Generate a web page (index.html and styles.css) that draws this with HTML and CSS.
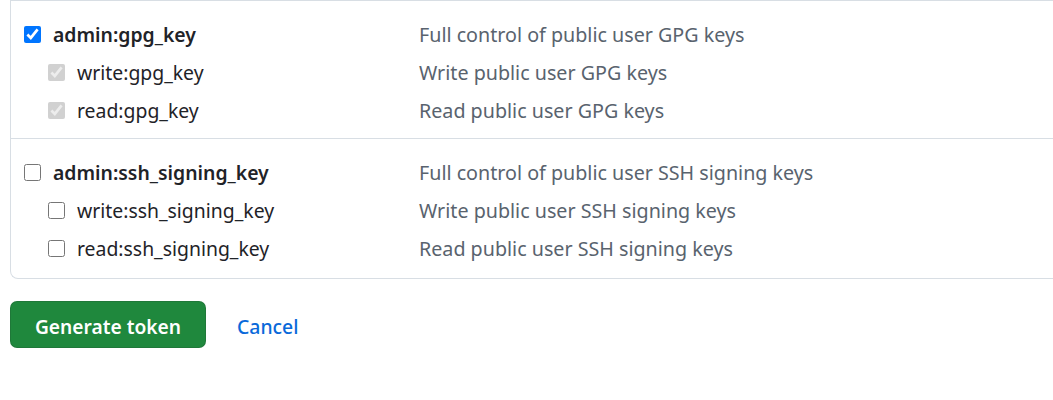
FILE: index.html
```html
<!DOCTYPE html>
<html lang="en">
<head>
<meta charset="utf-8">
<link rel="stylesheet" href="styles.css">
</head>
<body>
<div class="page">
  <div class="scopes">
    <div class="group first">
      <div class="row">
        <label class="scope main"><input type="checkbox" checked><span>admin:gpg_key</span></label>
        <span class="desc">Full control of public user GPG keys</span>
      </div>
      <div class="row">
        <label class="scope sub"><input type="checkbox" checked disabled><span>write:gpg_key</span></label>
        <span class="desc">Write public user GPG keys</span>
      </div>
      <div class="row">
        <label class="scope sub"><input type="checkbox" checked disabled><span>read:gpg_key</span></label>
        <span class="desc">Read public user GPG keys</span>
      </div>
    </div>
    <div class="group">
      <div class="row">
        <label class="scope main"><input type="checkbox"><span>admin:ssh_signing_key</span></label>
        <span class="desc">Full control of public user SSH signing keys</span>
      </div>
      <div class="row">
        <label class="scope sub"><input type="checkbox"><span>write:ssh_signing_key</span></label>
        <span class="desc">Write public user SSH signing keys</span>
      </div>
      <div class="row">
        <label class="scope sub"><input type="checkbox"><span>read:ssh_signing_key</span></label>
        <span class="desc">Read public user SSH signing keys</span>
      </div>
    </div>
  </div>
  <div class="actions">
    <button class="btn-primary" type="button">Generate token</button>
    <a class="cancel" href="#">Cancel</a>
  </div>
</div>
</body>
</html>
```

FILE: styles.css
```css
html, body {
  margin: 0;
  padding: 0;
  background: #ffffff;
}
body {
  font-family: "Noto Sans", "Open Sans", sans-serif;
  font-size: 19.4px;
  color: #1f2328;
}
.page {
  padding-left: 10px;
}
.scopes {
  border: 1px solid #d8dee4;
  border-top: 0;
  border-right: 0;
  border-radius: 0 0 0 8px;
}
.group {
  border-top: 1px solid #d8dee4;
  padding: 14px 0 9px;
}
.group + .group {
  padding-bottom: 11px;
}
.row {
  display: flex;
  align-items: center;
  height: 38px;
}
.scope {
  box-sizing: border-box;
  display: flex;
  align-items: center;
  width: 408px;
  flex-shrink: 0;
}
.scope.main {
  padding-left: 13px;
  font-weight: 600;
}
.scope.sub {
  padding-left: 37px;
}
.scope input {
  width: 17px;
  height: 17px;
  margin: 0 12px 0 0;
}
.desc {
  color: #59636e;
  font-size: 19.7px;
}
.actions {
  display: flex;
  align-items: center;
  margin-top: 22px;
}
.btn-primary {
  font-family: inherit;
  font-size: 19.2px;
  font-weight: 600;
  color: #ffffff;
  background: #1f883d;
  border: 1px solid rgba(31, 35, 40, 0.15);
  border-radius: 7px;
  height: 47px;
  width: 196px;
  padding: 3px 0 0;
}
.cancel {
  margin-left: 31px;
  padding-top: 3px;
  color: #0969da;
  text-decoration: none;
  font-weight: 500;
}
```
